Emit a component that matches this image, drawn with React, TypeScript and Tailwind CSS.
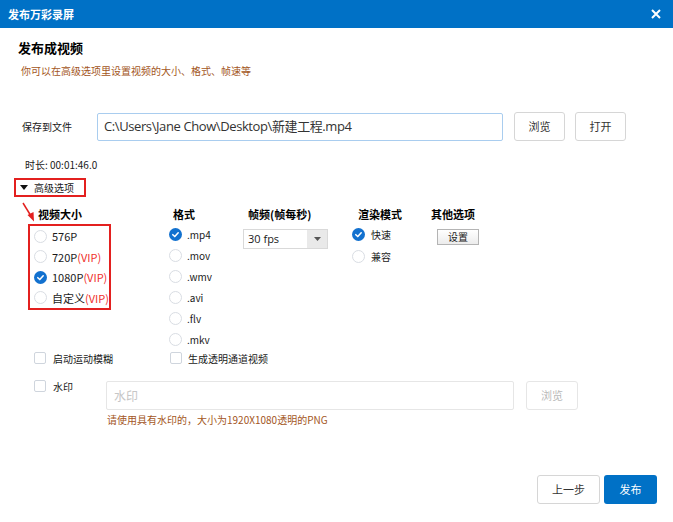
import React from 'react'

const CJK = '"Noto Sans CJK SC", "Noto Sans", sans-serif'

function Radio({ checked }: { checked?: boolean }) {
  if (checked) {
    return (
      <span className="flex h-[13px] w-[13px] shrink-0 items-center justify-center rounded-full bg-[#1271cf]">
        <svg width="9" height="9" viewBox="0 0 10 10">
          <path d="M2 5.2 L4.2 7.3 L8 3" fill="none" stroke="#fff" strokeWidth="1.7" strokeLinecap="round" strokeLinejoin="round" />
        </svg>
      </span>
    )
  }
  return <span className="h-[13px] w-[13px] shrink-0 rounded-full border border-[#d9dde3] bg-white" />
}

function Checkbox() {
  return <span className="h-[12px] w-[12px] shrink-0 rounded-[2px] border border-[#cfd5dd] bg-white" />
}

function Vip() {
  return <span className="text-[#f0302c]">(VIP)</span>
}

export default function App() {
  const sizes: [string, boolean, boolean][] = [
    ['576P', false, false],
    ['720P', true, false],
    ['1080P', true, true],
    ['自定义', true, false]
  ]
  const formats = ['.mp4', '.mov', '.wmv', '.avi', '.flv', '.mkv']

  return (
    <div className="flex h-[522px] w-[673px] flex-col overflow-hidden bg-white text-[#1a1a1a]" style={{ fontFamily: CJK }}>
      {/* title bar */}
      <div className="flex h-[28px] shrink-0 items-center justify-between bg-[#0071c6] pl-[8px] pr-[12px] text-white">
        <span className="text-[11px] font-bold">发布万彩录屏</span>
        <svg width="10" height="10" viewBox="0 0 10 10">
          <path d="M1 1 L9 9 M9 1 L1 9" stroke="#fff" strokeWidth="2" />
        </svg>
      </div>

      <div className="relative flex flex-1 flex-col pl-[18px]">
        <div className="pt-[10px] text-[13px] font-bold leading-[20px] text-black">发布成视频</div>
        <div className="ml-[3px] mt-[5px] text-[10px] leading-[16px] text-[#a3561d]">
          你可以在高级选项里设置视频的大小、格式、帧速等
        </div>

        {/* save to file */}
        <div className="mt-[33px] flex h-[29px] items-center">
          <span className="ml-[4px] w-[75px] text-[10px]">保存到文件</span>
          <div
            className="flex h-[28px] w-[406px] items-center rounded-[2px] border border-[#a9cdef] pl-[6px] text-[13px] text-[#333]"
            style={{ fontFamily: '"Open Sans", "Noto Sans CJK SC", sans-serif', letterSpacing: '-0.4px' }}
          >
            C:\Users\Jane Chow\Desktop\新建工程.mp4
          </div>
          <button className="ml-[11px] h-[29px] w-[51px] rounded-[3px] border border-[#d6d6d6] bg-white text-[11px] text-[#333]">
            浏览
          </button>
          <button className="ml-[10px] h-[29px] w-[51px] rounded-[3px] border border-[#d6d6d6] bg-white text-[11px] text-[#333]">
            打开
          </button>
        </div>

        <div className="ml-[7px] mt-[17px] text-[10px] leading-[14px]">时长: 00:01:46.0</div>

        {/* advanced options */}
        <div className="-ml-[4px] mt-[6px] flex h-[19px] w-[72px] items-center border-2 border-[#e3201f] pl-[4px]">
          <svg width="8" height="5" viewBox="0 0 8 5">
            <path d="M0 0 L8 0 L4 5 Z" fill="#111" />
          </svg>
          <span className="ml-[6px] text-[10px] leading-[14px]">高级选项</span>
        </div>

        <svg className="absolute left-[21px] top-[174px]" width="16" height="21" viewBox="0 0 16 21">
          <path d="M2 1 L10 14" stroke="#e3201f" strokeWidth="1.5" />
          <path d="M6.5 13 L13 19.5 L12.5 10 Z" fill="#e3201f" />
        </svg>

        {/* columns */}
        <div className="ml-[10px] mt-[9px] flex">
          <div className="w-[141px]">
            <div className="pl-[10px] text-[11px] font-bold leading-[16px] text-black">视频大小</div>
            <div className="mt-[2px] w-[83px] border-2 border-[#e3201f]">
              {sizes.map(([label, vip, checked]) => (
                <div key={label} className="flex h-[20.5px] items-center pl-[4px]">
                  <Radio checked={checked} />
                  <span className="ml-[5px] text-[11px]">
                    {label}
                    {vip && <Vip />}
                  </span>
                </div>
              ))}
            </div>
          </div>

          <div className="w-[74px]">
            <div className="pl-[4px] text-[11px] font-bold leading-[16px] text-black">格式</div>
            <div className="mt-[2px]">
              {formats.map((f, i) => (
                <div key={f} className="flex h-[21px] items-center">
                  <Radio checked={i === 0} />
                  <span className="ml-[5px] text-[10px]">{f}</span>
                </div>
              ))}
            </div>
          </div>

          <div className="w-[109px]">
            <div className="pl-[5px] text-[11px] font-bold leading-[16px] text-black">帧频(帧每秒)</div>
            <div className="mt-[7px] flex h-[20px] w-[85px] border border-[#d9d9d9]">
              <span className="flex flex-1 items-center pl-[4px] text-[11px]" style={{ fontFamily: '"Open Sans", sans-serif' }}>
                30 fps
              </span>
              <span className="flex w-[20px] items-center justify-center bg-[#e9e9e9]">
                <svg width="7" height="4" viewBox="0 0 7 4">
                  <path d="M0 0 L7 0 L3.5 4 Z" fill="#555" />
                </svg>
              </span>
            </div>
          </div>

          <div className="w-[79px]">
            <div className="pl-[6px] text-[11px] font-bold leading-[16px] text-black">渲染模式</div>
            <div className="mt-[1px]">
              <div className="flex h-[22px] items-center">
                <Radio checked />
                <span className="ml-[6px] text-[10px]">快速</span>
              </div>
              <div className="flex h-[22px] items-center">
                <Radio />
                <span className="ml-[6px] text-[10px]">兼容</span>
              </div>
            </div>
          </div>

          <div>
            <div className="text-[11px] font-bold leading-[16px] text-black">其他选项</div>
            <button className="ml-[6px] mt-[7px] h-[16px] w-[42px] border border-[#b4b4b4] bg-gradient-to-b from-white to-[#ececec] text-[10px] leading-[14px]">
              设置
            </button>
          </div>
        </div>

        {/* checkboxes */}
        <div className="ml-[16px] flex h-[16px] items-center text-[10px]">
          <div className="flex w-[136px] items-center">
            <Checkbox />
            <span className="ml-[7px]">启动运动模糊</span>
          </div>
          <div className="flex items-center">
            <Checkbox />
            <span className="ml-[6px]">生成透明通道视频</span>
          </div>
        </div>

        <div className="ml-[16px] mt-[15px] flex items-start text-[10px]">
          <div className="-mt-[1px] flex h-[12px] w-[72px] items-center">
            <Checkbox />
            <span className="ml-[7px]">水印</span>
          </div>
          <div className="flex h-[29px] w-[408px] items-center rounded-[2px] border border-[#e6e6e6] pl-[7px] text-[12px] text-[#c6c6c6]">
            水印
          </div>
          <button className="ml-[12px] h-[29px] w-[52px] rounded-[3px] border border-[#e6e6e6] bg-white text-[11px] text-[#b9b9b9]">
            浏览
          </button>
        </div>
        <div className="ml-[89px] mt-[3px] text-[10px] leading-[14px] text-[#a3561d]">
          请使用具有水印的，大小为1920X1080透明的PNG
        </div>

        {/* footer */}
        <div className="mt-auto flex justify-end gap-[4px] pb-[18px] pr-[16px]">
          <button className="h-[29px] w-[63px] rounded-[3px] border border-[#d6d6d6] bg-white text-[11px] text-[#333]">
            上一步
          </button>
          <button className="h-[29px] w-[53px] rounded-[3px] bg-[#0071c6] text-[11px] text-white">发布</button>
        </div>
      </div>
    </div>
  )
}
